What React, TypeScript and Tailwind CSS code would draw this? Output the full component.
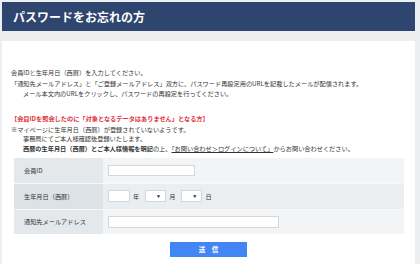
import React from 'react'

const font = { fontFamily: '"Noto Sans CJK JP", "Noto Sans", sans-serif' }

const Sel = () => (
  <div className="w-[21px] h-[12px] bg-white border border-[#d3d6d9] flex items-center justify-end pr-[5px]">
    <span className="text-[3.5px] leading-none text-[#333]">▼</span>
  </div>
)

export default function App() {
  return (
    <div style={font} className="w-[420px] h-[264px] overflow-hidden bg-[#eceeef] pl-[2px] pt-[2px] pr-[5px] text-[#333]">
      <div className="h-[29px] bg-[#2e4570] flex items-center pl-[11px]">
        <h1 className="text-white font-bold text-[12px] leading-none">パスワードをお忘れの方</h1>
      </div>

      <div className="mt-[10px] bg-white h-[240px] pt-[27px] pl-[9px] text-[6.2px]">
        <p className="leading-[10px]">会員IDと生年月日（西暦）を入力してください。</p>
        <p className="leading-[9.5px] mt-[1px]">
          「通知先メールアドレス」と「ご登録メールアドレス」双方に、パスワード再設定用のURLを記載したメールが配信されます。
          <br />
          <span className="pl-[12px]">メール本文内のURLをクリックし、パスワードの再設定を行ってください。</span>
        </p>

        <p className="leading-[10px] mt-[16px] text-[#e0303a] font-bold">【会員IDを照会したのに「対象となるデータはありません」となる方】</p>
        <p className="leading-[9.3px] mt-[1px]">
          ※マイページに生年月日（西暦）が登録されていないようです。
          <br />
          <span className="pl-[12px]">事務局にてご本人様確認後登録いたします。</span>
          <br />
          <span className="pl-[12px] font-bold">西暦の生年月日（西暦）とご本人様情報を明記</span>の上、
          <span className="underline">「お問い合わせ＞ログインについて」</span>からお問い合わせください。
        </p>

        <div className="ml-[3px] mt-[5px] w-[390px] text-[6.2px]">
          <div className="flex h-[25px]">
            <div className="w-[89px] bg-[#e5e8eb] flex items-center pl-[10px]">会員ID</div>
            <div className="flex-1 bg-[#f3f4f6] flex items-center pl-[5px]">
              <div className="w-[87px] h-[11px] bg-white border border-[#d3d6d9]" />
            </div>
          </div>
          <div className="flex h-[26px] border-t border-[#f7f8f9]">
            <div className="w-[89px] bg-[#dde2e7] flex items-center pl-[10px]">生年月日（西暦）</div>
            <div className="flex-1 bg-[#ebeef1] flex items-center pl-[5px] gap-[3px]">
              <div className="w-[22px] h-[12px] bg-white border border-[#d3d6d9]" />
              <span className="mr-[3px]">年</span>
              <Sel />
              <span className="mr-[3px]">月</span>
              <Sel />
              <span>日</span>
            </div>
          </div>
          <div className="flex h-[25px] border-t border-[#f7f8f9]">
            <div className="w-[89px] bg-[#e5e8eb] flex items-center pl-[10px]">通知先メールアドレス</div>
            <div className="flex-1 bg-[#f3f4f6] flex items-center pl-[5px]">
              <div className="w-[171px] h-[12px] bg-white border border-[#d3d6d9]" />
            </div>
          </div>
        </div>

        <div className="flex justify-center mt-[8px] pr-[9px]">
          <button className="w-[77px] h-[15px] bg-[#4285f4] text-white font-bold text-[6.5px] flex items-center justify-center">
            送　信
          </button>
        </div>
      </div>
    </div>
  )
}
